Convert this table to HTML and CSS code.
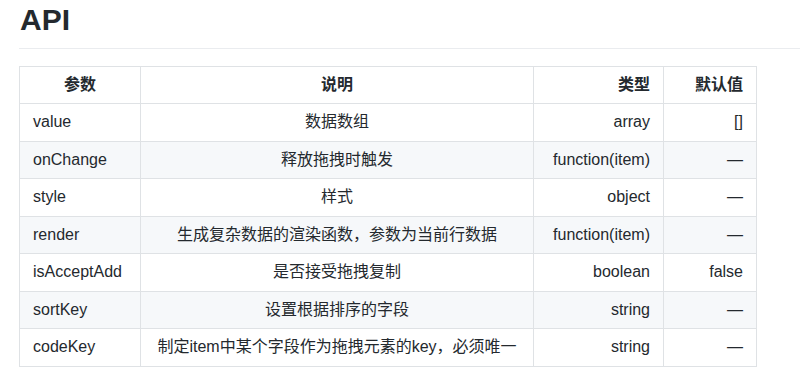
FILE: index.html
```html
<!DOCTYPE html>
<html lang="zh">
<head>
<meta charset="utf-8">
<title>API</title>
<link rel="stylesheet" href="styles.css">
</head>
<body>
<main class="doc">
  <h1 class="title">API</h1>
  <table class="api">
    <colgroup>
      <col class="c-name"><col class="c-desc"><col class="c-type"><col class="c-def">
    </colgroup>
    <thead>
      <tr><th class="center">参数</th><th class="center">说明</th><th class="right">类型</th><th class="right">默认值</th></tr>
    </thead>
    <tbody>
      <tr><td>value</td><td class="center">数据数组</td><td class="right">array</td><td class="right">[]</td></tr>
      <tr><td>onChange</td><td class="center">释放拖拽时触发</td><td class="right">function(item)</td><td class="right">—</td></tr>
      <tr><td>style</td><td class="center">样式</td><td class="right">object</td><td class="right">—</td></tr>
      <tr><td>render</td><td class="center">生成复杂数据的渲染函数，参数为当前行数据</td><td class="right">function(item)</td><td class="right">—</td></tr>
      <tr><td>isAcceptAdd</td><td class="center">是否接受拖拽复制</td><td class="right">boolean</td><td class="right">false</td></tr>
      <tr><td>sortKey</td><td class="center">设置根据排序的字段</td><td class="right">string</td><td class="right">—</td></tr>
      <tr><td>codeKey</td><td class="center">制定item中某个字段作为拖拽元素的key，必须唯一</td><td class="right">string</td><td class="right">—</td></tr>
    </tbody>
  </table>
</main>
</body>
</html>
```
FILE: styles.css
```css
html, body {
  margin: 0;
  padding: 0;
  background: #fff;
}
body {
  font-family: "Liberation Sans", Arial, "Noto Sans CJK SC", sans-serif;
  color: #24292e;
  font-size: 16px;
}
.doc {
  padding-left: 19px;
}
.title {
  margin: 0 0 17px 0;
  padding: 1px 0 9px 1px;
  font-size: 30px;
  line-height: 37.5px;
  font-weight: 700;
  border-bottom: 1px solid #eaecef;
}
.api {
  border-collapse: collapse;
  table-layout: fixed;
  width: 737px;
}
.c-name { width: 121px; }
.c-desc { width: 393px; }
.c-type { width: 130px; }
.c-def { width: 93px; }
.api th, .api td {
  border: 1px solid #dfe2e5;
  padding: 6px 13px;
  line-height: 24.5px;
  text-align: left;
  white-space: nowrap;
  overflow: hidden;
}
.api th {
  font-weight: 700;
}
.api tbody tr:nth-child(2n) {
  background: #f6f8fa;
}
.api .center { text-align: center; }
.api .right { text-align: right; }
```
